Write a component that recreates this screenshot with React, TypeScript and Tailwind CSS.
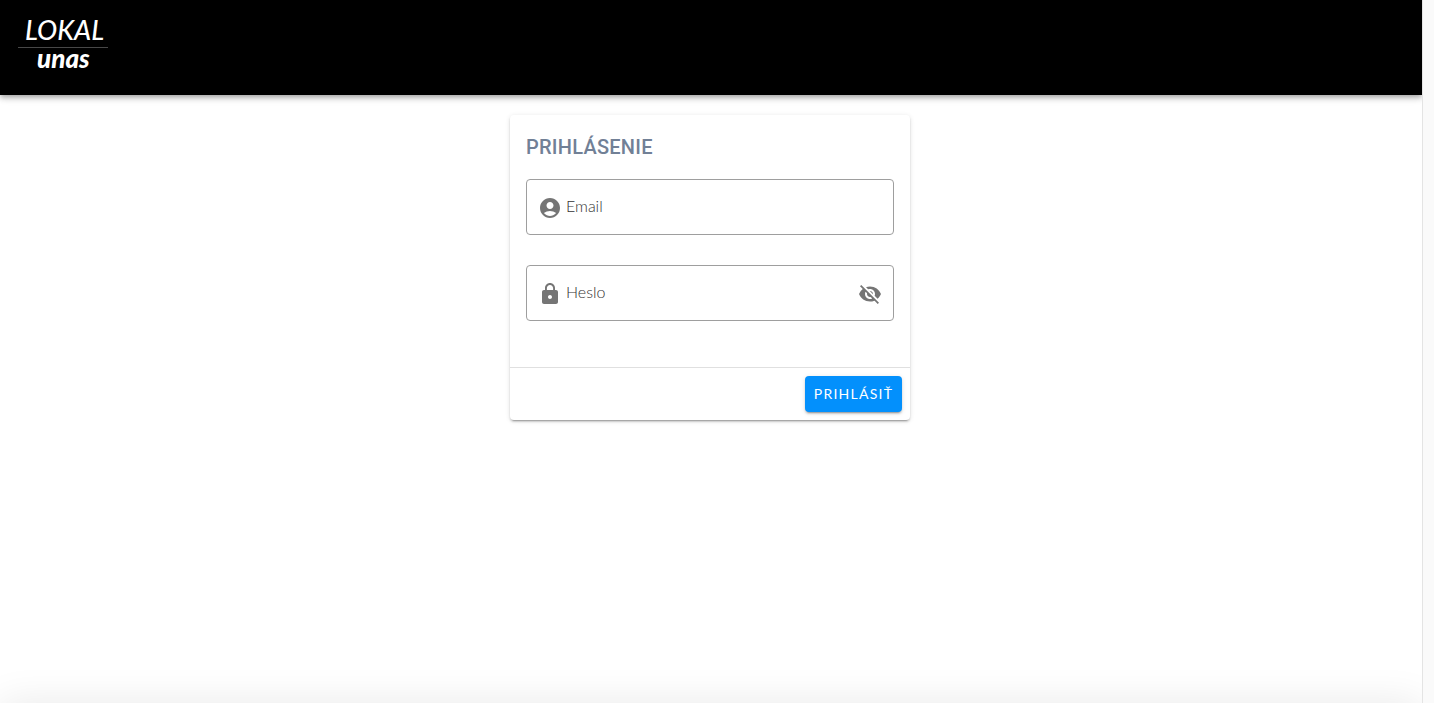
import { useState } from "react";
import { MdAccountCircle, MdLock, MdVisibility, MdVisibilityOff } from "react-icons/md";

function Logo() {
  return (
    <a href="#" aria-label="LOKAL unas" className="block">
      <svg width="100" height="72" viewBox="0 0 100 72" fill="#fff" aria-hidden="true">
        <text x="9" y="32" fontFamily="Lato, sans-serif" fontStyle="italic" fontWeight="500" fontSize="27">
          LOKAL
        </text>
        <rect x="2" y="39" width="90" height="1" fill="#484848" />
        <text x="21" y="60" fontFamily="Lato, sans-serif" fontStyle="italic" fontWeight="900" fontSize="26">
          unas
        </text>
      </svg>
    </a>
  );
}

const fieldBox =
  "flex h-14 items-center gap-1 rounded border border-[#9e9e9e] px-[11px] pt-0.5 text-[#757575] focus-within:border-[#0390fc]";
const fieldInput =
  "h-8 min-w-0 flex-1 bg-transparent pb-1.5 font-[Lato,sans-serif] text-base font-light text-[#333] outline-none placeholder:text-[#333] placeholder:opacity-100";

export default function App() {
  const [visible, setVisible] = useState(false);
  return (
    <div className="flex min-h-screen bg-white font-[Lato,sans-serif]">
      <div className="relative flex min-w-0 flex-1 flex-col overflow-hidden">
        <header className="flex h-[95px] items-start bg-black px-4 pt-2 shadow-[0_2px_4px_-1px_rgba(0,0,0,0.2),0_4px_5px_rgba(0,0,0,0.14),0_1px_10px_rgba(0,0,0,0.12)]">
          <Logo />
        </header>
        <main className="flex flex-1 items-start justify-center pt-5 pr-0.5">
          <form
            onSubmit={(e) => e.preventDefault()}
            className="w-full max-w-[400px] rounded bg-white shadow-[0_3px_1px_-2px_rgba(0,0,0,0.2),0_2px_2px_rgba(0,0,0,0.14),0_1px_5px_rgba(0,0,0,0.12)]"
          >
            <h1 className="px-4 py-4 font-[Roboto,sans-serif] text-xl leading-8 font-medium tracking-[0.0125em] text-[#718096]">
              PRIHLÁSENIE
            </h1>
            <div className="flex flex-col gap-[30px] px-4 pb-[46px]">
              <div className={fieldBox}>
                <label htmlFor="email" aria-label="Email">
                  <MdAccountCircle size={24} />
                </label>
                <input id="email" type="email" placeholder="Email" className={fieldInput} />
              </div>
              <div className={fieldBox}>
                <label htmlFor="password" aria-label="Heslo">
                  <MdLock size={24} />
                </label>
                <input
                  id="password"
                  type={visible ? "text" : "password"}
                  placeholder="Heslo"
                  className={fieldInput}
                />
                <button type="button" aria-label="Zobraziť heslo" onClick={() => setVisible(!visible)}>
                  {visible ? <MdVisibility size={24} /> : <MdVisibilityOff size={24} />}
                </button>
              </div>
            </div>
            <div className="flex justify-end border-t border-[#e0e0e0] p-2">
              <button
                type="submit"
                className="h-9 min-w-[97px] rounded bg-[#0390fc] px-2 text-sm tracking-[0.0892857143em] text-white shadow-[0_3px_1px_-2px_rgba(0,0,0,0.2),0_2px_2px_rgba(0,0,0,0.14),0_1px_5px_rgba(0,0,0,0.12)]"
              >
                PRIHLÁSIŤ
              </button>
            </div>
          </form>
        </main>
        <footer className="absolute inset-x-0 top-full h-24 shadow-[0_0_40px_rgba(0,0,0,0.09)]" />
      </div>
      <div className="w-3 shrink-0 border-l border-[#e4e4e4] bg-[#fafafa]" />
    </div>
  );
}
